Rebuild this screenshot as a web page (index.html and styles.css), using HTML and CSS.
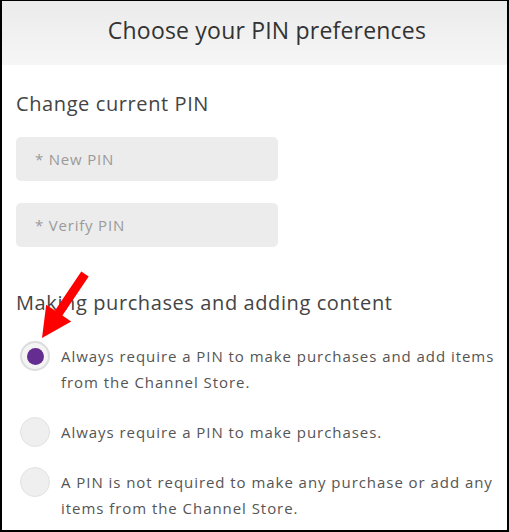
FILE: index.html
```html
<!DOCTYPE html>
<html>
<head>
<meta charset="utf-8">
<link rel="stylesheet" href="styles.css">
</head>
<body>
<div class="frame">
  <div class="header">
    <h1 class="title">Choose your PIN preferences</h1>
  </div>
  <div class="content">
    <h2 class="section-title">Change current PIN</h2>
    <div class="field"><span class="placeholder">* New PIN</span></div>
    <div class="field"><span class="placeholder">* Verify PIN</span></div>
    <h2 class="section-title purchases">Making purchases and adding content</h2>
    <div class="options">
      <div class="option">
        <span class="radio checked"><span class="dot"></span></span>
        <span class="label">Always require a PIN to make purchases and add items from the Channel Store.</span>
      </div>
      <div class="option">
        <span class="radio"></span>
        <span class="label">Always require a PIN to make purchases.</span>
      </div>
      <div class="option">
        <span class="radio"></span>
        <span class="label">A PIN is not required to make any purchase or add any items from the Channel Store.</span>
      </div>
    </div>
  </div>
  <svg class="arrow" width="100" height="80" viewBox="0 0 100 80">
    <polygon points="86.7,16.5 79.3,11.5 53,50.6 44.2,44.7 40,78 69.2,61.5 60.4,55.6" fill="#f00"/>
  </svg>
</div>
</body>
</html>
```

FILE: styles.css
```css
html, body {
  margin: 0;
  padding: 0;
  background: #fff;
}
.frame {
  position: relative;
  box-sizing: border-box;
  width: 509px;
  height: 532px;
  border-top: 1px solid #000;
  border-left: 2px solid #000;
  border-right: 2px solid #000;
  border-bottom: 2px solid #000;
  overflow: hidden;
  font-family: "Open Sans", "Liberation Sans", sans-serif;
}
.header {
  height: 64px;
  box-sizing: border-box;
  padding: 0 0 6px 25px;
  background: linear-gradient(#ebebeb, #f6f6f6);
  display: flex;
  align-items: center;
  justify-content: center;
}
.title {
  margin: 0;
  font-size: 23px;
  font-weight: 400;
  letter-spacing: 0.2px;
  color: #333;
  line-height: 28px;
}
.content {
  padding: 27px 0 0 14px;
}
.section-title {
  margin: 0;
  font-size: 20px;
  font-weight: 400;
  letter-spacing: 0.6px;
  color: #444;
  line-height: 24px;
}
.field {
  margin-top: 21px;
  width: 262px;
  height: 44px;
  box-sizing: border-box;
  background: #ececec;
  border-radius: 5px;
  display: flex;
  align-items: center;
  padding-left: 19px;
}
.field + .field {
  margin-top: 22px;
}
.placeholder {
  font-size: 15px;
  letter-spacing: 0.8px;
  color: #9a9a9a;
}
.purchases {
  margin-top: 44px;
}
.options {
  margin-top: 28px;
  display: flex;
  flex-direction: column;
  gap: 24px;
}
.option {
  display: flex;
  align-items: flex-start;
}
.radio {
  flex: none;
  box-sizing: border-box;
  width: 30px;
  height: 30px;
  margin: -2px 11px -2px 4px;
  border-radius: 50%;
  background: #efefef;
  border: 1px solid #e2e2e2;
  display: flex;
  align-items: center;
  justify-content: center;
}
.radio.checked {
  background: #f4f4f4;
  border: 2px solid #dcdcdc;
}
.dot {
  width: 17px;
  height: 17px;
  border-radius: 50%;
  background: #662d91;
}
.label {
  font-size: 15px;
  line-height: 26px;
  letter-spacing: 0.95px;
  color: #555;
  padding-right: 4px;
}
.arrow {
  position: absolute;
  left: 0;
  top: 259px;
}
```
